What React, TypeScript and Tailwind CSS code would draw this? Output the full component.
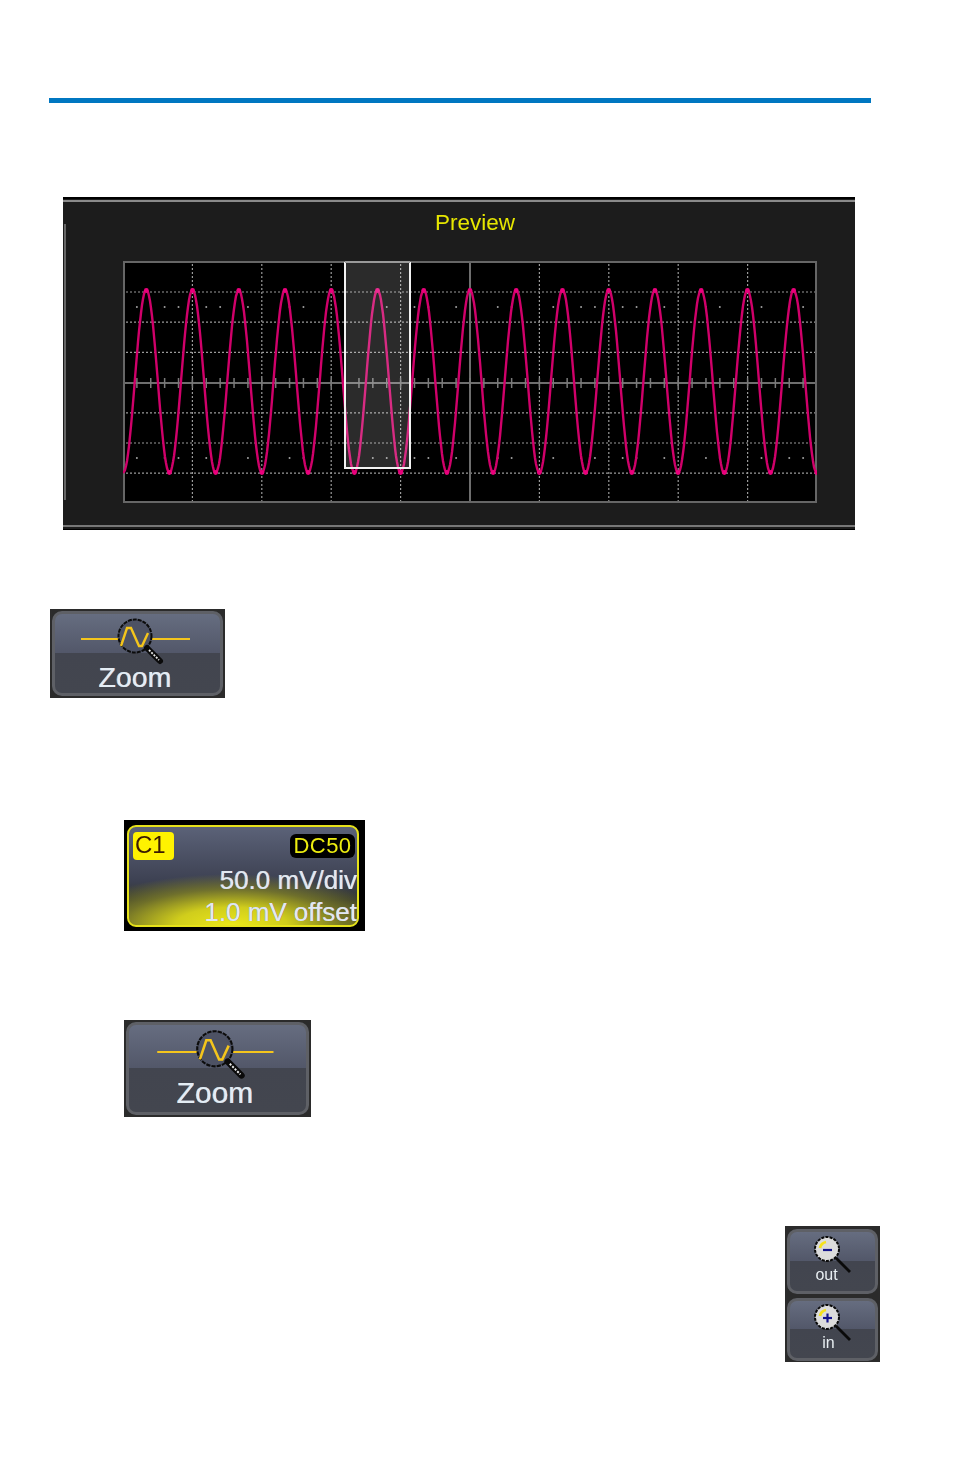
import React from "react";

const W = 694;
const H = 242;

const trace = Array.from({ length: W + 1 }, (_, x) => {
  const y = 120.5 - 91.5 * Math.cos(((x - 23.3) / 46.24) * 2 * Math.PI);
  return `${x},${Math.round(y)}`;
}).join(" ");

const extremes = Array.from({ length: 30 }, (_, i) => ({
  x: 23.3 + (i * 46.24) / 2,
  y: i % 2 === 0 ? 29.5 : 211.5,
})).filter((p) => p.x <= W);

const ticks = Array.from({ length: 49 }, (_, i) => ({ k: i + 1, x: (i + 1) * 13.88 }));
const vGrid = [1, 2, 3, 4, 6, 7, 8, 9].map((k) => k * 69.4);
const hGrid = [1, 2, 3, 5, 6, 7].map((k) => k * 30.2 + 0.8);

function Scope() {
  return (
    <svg width={W} height={H} viewBox={`0 0 ${W} ${H}`} className="block">
      <rect x="1" y="1" width={W - 2} height={H - 2} fill="#000" stroke="#666" strokeWidth="2" />
      {vGrid.map((x) => (
        <line key={x} x1={x} x2={x} y1="3" y2={H - 2} stroke="#9a9a9a" strokeWidth="1.2" strokeDasharray="2 2" />
      ))}
      {hGrid.map((y) => (
        <line key={y} x1="3" x2={W - 2} y1={y} y2={y} stroke="#9a9a9a" strokeWidth="1.2" strokeDasharray="2 2" />
      ))}
      {ticks.map(({ k, x }) =>
        k % 5 !== 0 && k % 3 !== 2 ? (
          <g key={x} fill="#a0a0a0">
            <circle cx={x} cy="46" r="1" />
            <circle cx={x} cy="197" r="1" />
          </g>
        ) : null
      )}
      <line x1="2" x2={W - 2} y1="122" y2="122" stroke="#6e6e6e" strokeWidth="2" />
      <line x1="347" x2="347" y1="2" y2={H - 2} stroke="#6e6e6e" strokeWidth="2" />
      {ticks.map(({ x }) => (
        <line key={x} x1={x} x2={x} y1="117" y2="127" stroke="#7a7a7a" strokeWidth="1.5" />
      ))}
      <polyline points={trace} fill="none" stroke="#d0006a" strokeWidth="2.4" strokeLinejoin="round" />
      {extremes.map((p) => (
        <circle key={p.x} cx={p.x} cy={p.y} r="2.4" fill="#ea007c" />
      ))}
      <rect x="221" y="1" width="67" height="206" fill="#ffffff" fillOpacity="0.17" stroke="none" />
      <path d="M222 1V207H287V1" fill="none" stroke="#f2f2f2" strokeWidth="2" />
      <line x1="222" x2="287" y1="1" y2="1" stroke="#9a9a9a" strokeWidth="2" />
    </svg>
  );
}

function WaveLens({ className }: { className: string }) {
  return (
    <svg viewBox="0 0 175 60" className={className}>
      <path d="M31 30H69M101 30H140" stroke="#f4c51c" strokeWidth="2" fill="none" />
      <circle cx="85" cy="27" r="16.5" fill="#4d5264" stroke="#0c0c0c" strokeWidth="2" strokeDasharray="4 1" />
      <path d="M71 37L77 19L81 19L89 37L92 37L98 24" stroke="#f4c51c" strokeWidth="2.4" fill="none" strokeLinejoin="miter" />
      <path d="M97 39L110 52" stroke="#0a0a0a" strokeWidth="6" strokeLinecap="round" />
      <path d="M99 41L109 51" stroke="#e8e8e8" strokeWidth="1.8" strokeDasharray="2 1.3" />
    </svg>
  );
}

function ZoomLens({ plus }: { plus: boolean }) {
  return (
    <svg viewBox="0 0 44 38" className="block w-[44px] h-[38px]">
      <path d="M25 23L39 37" stroke="#0a0a0a" strokeWidth="2.8" />
      <circle cx="16" cy="14" r="12" fill="#dcdcdc" stroke="#0a0a0a" strokeWidth="2" strokeDasharray="3 1.2" />
      <path d="M9 13Q10 8 15 7" stroke="#f5e21c" strokeWidth="2.8" fill="none" />
      <path d="M12 15H21" stroke="#14148c" strokeWidth="2.2" />
      {plus && <path d="M16.5 10.5V19.5" stroke="#14148c" strokeWidth="2.2" />}
    </svg>
  );
}

const buttonFace =
  "bg-[linear-gradient(#666d80,#525769_50%,#42454f_50%,#43464f)] border-[3px] border-[#5e6066] rounded-[10px]";

const fringe =
  "[text-shadow:-0.6px_0_0_rgba(120,190,240,0.8),0.6px_0_0_rgba(220,140,100,0.8)]";

const mono = { fontFamily: '"Liberation Sans", Arial, sans-serif' };

export default function App() {
  return (
    <div className="w-[954px] h-[1474px] bg-white pt-[98px] overflow-hidden" style={mono}>
      <div className="ml-[49px] w-[822px] h-[5px] bg-[#0077c1]" />

      <div className="ml-[63px] mt-[94px] w-[792px] h-[333px] bg-[#1c1c1c] flex flex-col border-t-2 border-b-[1.5px] border-black blur-[0.4px]">
        <div className="mt-px h-[2px] bg-[#8a8a8a]" />
        <div className="flex flex-1">
          <div className="ml-px mt-[22px] w-[2px] h-[276px] bg-[#666666]" />
          <div className="ml-[57px]">
            <div className="h-[59px] w-[693px] pl-[11px] pt-[7px] text-center text-[22.5px] leading-[28px] text-[#e6e600]">
              Preview
            </div>
            <Scope />
          </div>
        </div>
        <div className="mb-[2px] h-[2px] bg-[#777777]" />
      </div>

      <div className="ml-[50px] mt-[79px] w-[175px] h-[89px] bg-[#2b2b2b] p-[2px] blur-[0.4px]">
        <div className={`h-full flex flex-col items-center ${buttonFace}`}>
          <WaveLens className="block w-[175px] h-[60px] shrink-0 -mt-[5px]" />
          <div className={`text-[28.5px] leading-[28px] -mt-[6px] -ml-[5px] text-[#e4edf4] ${fringe}`}>Zoom</div>
        </div>
      </div>

      <div className="ml-[124px] mt-[122px] w-[241px] h-[111px] bg-black pl-[3px] pr-[6px] pt-[5px] pb-[4px] blur-[0.4px]">
        <div className="h-full overflow-hidden border-2 border-[#e6e21a] rounded-[9px] bg-[radial-gradient(ellipse_70%_52%_at_45%_100%,#ebe71a_0%,#d0cd1c_35%,rgba(130,130,40,0.75)_70%,transparent_100%),linear-gradient(#5b6278,#3d4152_55%,#34372e_75%,#55551f)] pl-[4px] pt-[5px]">
          <div className="flex items-start justify-between pr-[2px]">
            <div className="w-[41px] h-[28px] rounded-[4px] bg-[#fff200] text-[#3a1a00] text-[24px] leading-[26px] pl-[2px]">
              C1
            </div>
            <div className="w-[65px] h-[24px] mt-[2px] rounded-[6px] bg-black text-[#eded10] text-[22px] leading-[24px] text-center tracking-[0.4px]">
              DC50
            </div>
          </div>
          <div className="h-[66px] mt-[4px] text-right text-[#e2e8f0] text-[26px] leading-[32px] whitespace-nowrap">
            <div className={fringe}>50.0 mV/div</div>
            <div className={fringe}>1.0 mV offset</div>
          </div>
        </div>
      </div>

      <div className="ml-[124px] mt-[89px] w-[187px] h-[97px] bg-[#2b2b2b] p-[2px] blur-[0.4px]">
        <div className={`h-full flex flex-col items-center ${buttonFace}`}>
          <WaveLens className="block w-[187px] h-[64px] shrink-0 -mt-[5px]" />
          <div className={`text-[30px] leading-[30px] -mt-[6px] -ml-[5px] text-[#e4edf4] ${fringe}`}>Zoom</div>
        </div>
      </div>

      <div className="ml-[785px] mt-[109px] w-[95px] h-[136px] bg-[#2b2b2b] px-[2px] pt-[3px] flex flex-col gap-[4px] blur-[0.3px]">
        <div className={`h-[65px] flex flex-col items-center ${buttonFace}`}>
          <div className="mt-[3px] ml-[1px] h-[38px]"><ZoomLens plus={false} /></div>
          <div className="text-[16px] leading-[16px] -mt-[6px] -ml-[12px] text-[#e8eef2]">out</div>
        </div>
        <div className={`h-[63px] flex flex-col items-center ${buttonFace}`}>
          <div className="mt-[2px] ml-[1px] h-[38px]"><ZoomLens plus={true} /></div>
          <div className="text-[16px] leading-[16px] -mt-[6px] -ml-[8px] text-[#e8eef2]">in</div>
        </div>
      </div>
    </div>
  );
}
